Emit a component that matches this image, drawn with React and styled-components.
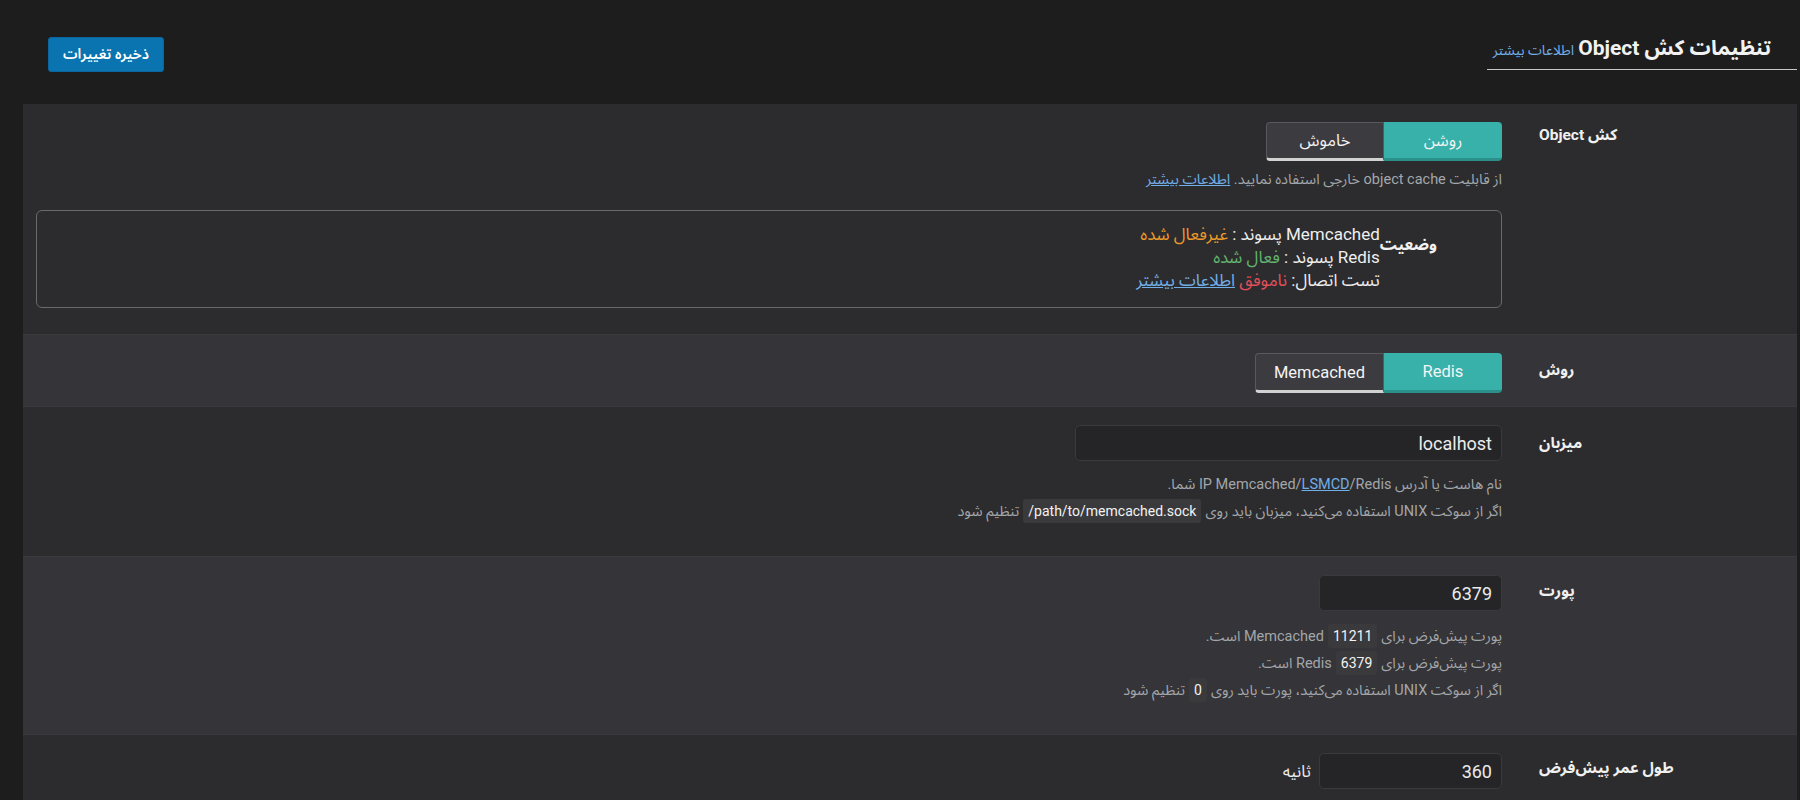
import React from "react";
import styled, { createGlobalStyle } from "styled-components";

const Global = createGlobalStyle`
  html, body {
    margin: 0;
    padding: 0;
    background: #1d1d1d;
    height: 800px;
    overflow: hidden;
  }
  body {
    font-family: Roboto, "Noto Sans Arabic", "Vazirmatn", "DejaVu Sans", sans-serif;
    color: #ececec;
  }
  * { box-sizing: border-box; }
`;

const Page = styled.div`
  direction: rtl;
  width: 1800px;
`;

const Header = styled.header`
  display: flex;
  justify-content: space-between;
  align-items: flex-start;
  height: 104px;
  padding: 0 3px 0 48px;
`;

const TitleBlock = styled.div`
  width: 310px;
  margin-top: 33px;
  height: 37px;
  padding-right: 26px;
  border-bottom: 1px solid #c6c6c6;
  display: flex;
  align-items: baseline;
  gap: 4px;
`;

const Title = styled.h1`
  margin: 0;
  font-size: 21px;
  font-weight: 700;
  color: #f2f2f2;
  line-height: 30px;
`;

const HeadLink = styled.a`
  font-size: 14px;
  color: #72aee6;
  text-decoration: none;
`;

const SaveButton = styled.button`
  margin-top: 37px;
  height: 35px;
  width: 116px;
  background: #0a74b0;
  border: 1px solid #0b65a0;
  border-radius: 3px;
  color: #fff;
  font-family: inherit;
  font-size: 14.5px;
  font-weight: 600;
  cursor: pointer;
`;

const Panel = styled.section`
  margin: 0 3px 0 23px;
`;

const Row = styled.div`
  display: flex;
  background: ${(p) => (p.$alt ? "#353438" : "#2c2c2e")};
  border-top: ${(p) => (p.$first ? "none" : "1px solid #3a3a3d")};
  padding: 18px 0 ${(p) => p.$pb ?? 15}px;
`;

const Label = styled.div`
  flex: 0 0 295px;
  min-width: 0;
  padding-left: 37px;
  padding-top: ${(p) => p.$pt ?? 5}px;
  text-align: left;
  font-size: 15.5px;
  font-weight: 700;
  line-height: 24px;
  color: #f0f0f0;
  white-space: nowrap;
`;

const Content = styled.div`
  flex: 1;
  padding-left: 13px;
`;

const Toggle = styled.div`
  display: inline-flex;
`;

const ToggleBtn = styled.button`
  min-width: 118px;
  height: ${(p) => p.$h || 39}px;
  padding: 0 18px;
  font-family: inherit;
  font-size: 16.5px;
  color: #f4f4f4;
  cursor: pointer;
  background: ${(p) => (p.$active ? "#37b1a9" : "#3c3b40")};
  border: ${(p) => (p.$active ? "none" : "1px solid #58585d")};
  border-bottom: 3px solid ${(p) => (p.$active ? "#2a9089" : "#d2d2d2")};
  border-radius: ${(p) => (p.$active ? "0 4px 4px 0" : "4px 0 0 4px")};
`;

const Desc = styled.div`
  margin-top: ${(p) => p.$mt ?? 8}px;
  font-size: 14.5px;
  line-height: ${(p) => p.$lh ?? 20}px;
  color: #a3a7ab;
  padding-bottom: ${(p) => p.$pb ?? 0}px;
`;

const Line = styled.div`
  white-space: nowrap;
`;

const Ltr = styled.span`
  direction: ltr;
  unicode-bidi: isolate;
`;

const Link = styled.a`
  color: #72aee6;
  text-decoration: underline;
`;

const Code = styled.code`
  display: inline-block;
  direction: ltr;
  unicode-bidi: isolate;
  background: #3a3a3d;
  color: #f2f2f2;
  font-family: inherit;
  font-size: 14px;
  line-height: 20px;
  padding: 2px 5px;
  margin: 0 4px;
  border-radius: 3px;
`;

const StatusBox = styled.div`
  margin-top: 20px;
  margin-bottom: 11px;
  border: 1px solid #6a6a6d;
  border-radius: 6px;
  padding: 12px 64px 15px 0;
  display: flex;
  align-items: flex-start;
`;

const StatusLabel = styled.div`
  font-size: 16px;
  font-weight: 700;
  color: #f2f2f2;
  padding-top: 5px;
`;

const StatusLines = styled.div`
  font-size: 17px;
  line-height: 23px;
  color: #efefef;
`;

const Tone = styled.span`
  color: ${(p) => p.$c};
`;

const InputWrap = styled.div`
  display: flex;
  align-items: center;
  gap: 8px;
`;

const Input = styled.input`
  width: ${(p) => p.$w}px;
  height: 36px;
  background: #252527;
  border: 1px solid #3a3a3e;
  border-radius: 5px;
  color: #ececec;
  font-family: inherit;
  font-size: 18px;
  padding: 0 9px;
  text-align: right;
  direction: rtl;
  outline: none;
`;

const Unit = styled.span`
  font-size: 16.5px;
  color: #eaeaea;
`;

export default function App() {
  return (
    <Page>
      <Global />
      <Header>
        <TitleBlock>
          <Title>تنظیمات کش Object</Title>
          <HeadLink href="#">اطلاعات بیشتر</HeadLink>
        </TitleBlock>
        <SaveButton>ذخیره تغییرات</SaveButton>
      </Header>
      <Panel>
        <Row $first>
          <Label $pt={1}>کش Object</Label>
          <Content>
            <Toggle>
              <ToggleBtn $active>روشن</ToggleBtn>
              <ToggleBtn>خاموش</ToggleBtn>
            </Toggle>
            <Desc $mt={9}>
              از قابلیت object cache خارجی استفاده نمایید.{" "}
              <Link href="#">اطلاعات بیشتر</Link>
            </Desc>
            <StatusBox>
              <StatusLabel>وضعیت</StatusLabel>
              <StatusLines>
                <Line>
                  Memcached پسوند : <Tone $c="#eb9a2a">غیرفعال شده</Tone>
                </Line>
                <Line>
                  Redis پسوند : <Tone $c="#62b46e">فعال شده</Tone>
                </Line>
                <Line>
                  تست اتصال: <Tone $c="#e0505c">ناموفق</Tone>{" "}
                  <Link href="#">اطلاعات بیشتر</Link>
                </Line>
              </StatusLines>
            </StatusBox>
          </Content>
        </Row>
        <Row $alt $pb={13}>
          <Label>روش</Label>
          <Content>
            <Toggle>
              <ToggleBtn $active $h={40}>Redis</ToggleBtn>
              <ToggleBtn $h={40}>Memcached</ToggleBtn>
            </Toggle>
          </Content>
        </Row>
        <Row>
          <Label $pt={6}>میزبان</Label>
          <Content>
            <Input $w={427} defaultValue="localhost" />
            <Desc $mt={10} $lh={27} $pb={16}>
              <Line>
                نام هاست یا آدرس{" "}
                <Ltr>
                  IP Memcached/<Link href="#">LSMCD</Link>/Redis
                </Ltr>{" "}
                شما.
              </Line>
              <Line>
                اگر از سوکت UNIX استفاده می‌کنید، میزبان باید روی
                <Code>/path/to/memcached.sock</Code>
                تنظیم شود
              </Line>
            </Desc>
          </Content>
        </Row>
        <Row $alt>
          <Label $pt={4}>پورت</Label>
          <Content>
            <Input $w={183} defaultValue="6379" />
            <Desc $mt={12} $lh={27} $pb={15}>
              <Line>
                پورت پیش‌فرض برای<Code>11211</Code>Memcached است.
              </Line>
              <Line>
                پورت پیش‌فرض برای<Code>6379</Code>Redis است.
              </Line>
              <Line>
                اگر از سوکت UNIX استفاده می‌کنید، پورت باید روی<Code>0</Code>تنظیم شود
              </Line>
            </Desc>
          </Content>
        </Row>
        <Row $pb={40}>
          <Label $pt={3}>طول عمر پیش‌فرض</Label>
          <Content>
            <InputWrap>
              <Input $w={183} defaultValue="360" />
              <Unit>ثانیه</Unit>
            </InputWrap>
          </Content>
        </Row>
      </Panel>
    </Page>
  );
}
